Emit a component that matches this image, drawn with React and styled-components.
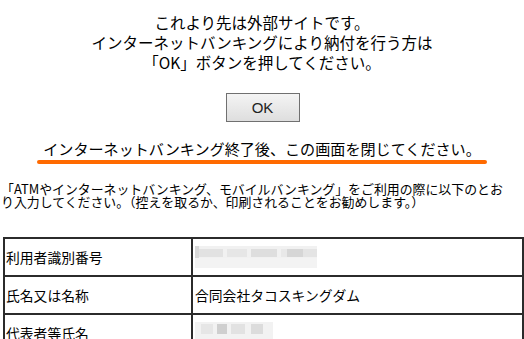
import React from "react";
import styled, { createGlobalStyle } from "styled-components";

const Global = createGlobalStyle`
  html, body { margin: 0; padding: 0; background: #fff; }
  body {
    font-family: "Noto Sans CJK JP", "Noto Sans", sans-serif;
    color: #000;
  }
`;

const Page = styled.div`
  width: 524px;
  height: 339px;
  overflow: hidden;
  display: flex;
  flex-direction: column;
`;

const Notice = styled.div`
  padding-top: 12px;
  text-align: center;
  font-size: 15.5px;
  line-height: 20px;
`;

const ButtonRow = styled.div`
  display: flex;
  justify-content: center;
  margin-top: 21px;
  padding-left: 1px;
`;

const OkButton = styled.button`
  width: 74px;
  height: 29px;
  border: 1px solid #707070;
  background: linear-gradient(#f4f4f4, #dedede);
  font-family: "Liberation Sans", Arial, sans-serif;
  font-size: 15px;
  color: #222;
  padding: 0;
`;

const CloseRow = styled.div`
  display: flex;
  justify-content: center;
  margin-top: 16px;
`;

const CloseText = styled.div`
  position: relative;
  padding: 0 6px 6px;
  font-size: 15.1px;
  line-height: 20px;
  &::after {
    content: "";
    position: absolute;
    left: 0;
    right: 0;
    bottom: 0;
    height: 4px;
    border-radius: 2px;
    background: #ff6a00;
  }
`;

const Intro = styled.p`
  margin: 18px 0 0;
  padding-left: 1px;
  font-size: 12.9px;
  line-height: 13px;
  white-space: nowrap;
`;

const Table = styled.table`
  margin: 29px 0 0 3px;
  width: 521px;
  border-collapse: collapse;
  border: 2px solid #2b2b2b;
  font-size: 13.8px;
`;

const Row = styled.tr`
  height: 38px;
`;

const Label = styled.td`
  width: 184px;
  padding: 0 1px;
  border: 2px solid #2b2b2b;
  vertical-align: middle;
`;

const Value = styled.td`
  padding: 0 2px;
  border: 2px solid #2b2b2b;
  vertical-align: middle;
`;

const Redacted = ({ w, blocks }) => (
  <svg width={w} height="22" style={{ display: "block" }}>
    {blocks.map(([x, y, bw, bh, c], i) => (
      <rect key={i} x={x} y={y} width={bw} height={bh} fill={c} />
    ))}
  </svg>
);

const blocks1 = [
  [0, 0, 122, 22, "#f1f1f1"],
  [0, 0, 4, 12, "#d8d8d8"],
  [4, 3, 24, 8, "#e2e2e2"],
  [32, 3, 20, 8, "#e6e6e6"],
  [56, 3, 26, 8, "#dedede"],
  [86, 3, 6, 8, "#e8e8e8"],
  [92, 3, 16, 8, "#d6d6d6"],
  [108, 3, 14, 8, "#e4e4e4"],
  [0, 12, 122, 10, "#f3f3f3"],
];

const blocks3 = [
  [0, 0, 78, 22, "#f2f2f2"],
  [6, 2, 12, 10, "#e6e6e6"],
  [22, 2, 10, 10, "#cfcfcf"],
  [36, 2, 14, 10, "#e2e2e2"],
  [56, 2, 12, 10, "#dcdcdc"],
];

export default function App() {
  return (
    <Page>
      <Global />
      <Notice>
        これより先は外部サイトです。
        <br />
        インターネットバンキングにより納付を行う方は
        <br />
        「OK」ボタンを押してください。
      </Notice>
      <ButtonRow>
        <OkButton type="button">OK</OkButton>
      </ButtonRow>
      <CloseRow>
        <CloseText>インターネットバンキング終了後、この画面を閉じてください。</CloseText>
      </CloseRow>
      <Intro>
        「ATMやインターネットバンキング、モバイルバンキング」をご利用の際に以下のとお
        <br />
        り入力してください。（控えを取るか、印刷されることをお勧めします。）
      </Intro>
      <Table>
        <tbody>
          <Row>
            <Label>利用者識別番号</Label>
            <Value>
              <Redacted w={122} blocks={blocks1} />
            </Value>
          </Row>
          <Row>
            <Label>氏名又は名称</Label>
            <Value>合同会社タコスキングダム</Value>
          </Row>
          <Row>
            <Label>代表者等氏名</Label>
            <Value>
              <Redacted w={78} blocks={blocks3} />
            </Value>
          </Row>
        </tbody>
      </Table>
    </Page>
  );
}
